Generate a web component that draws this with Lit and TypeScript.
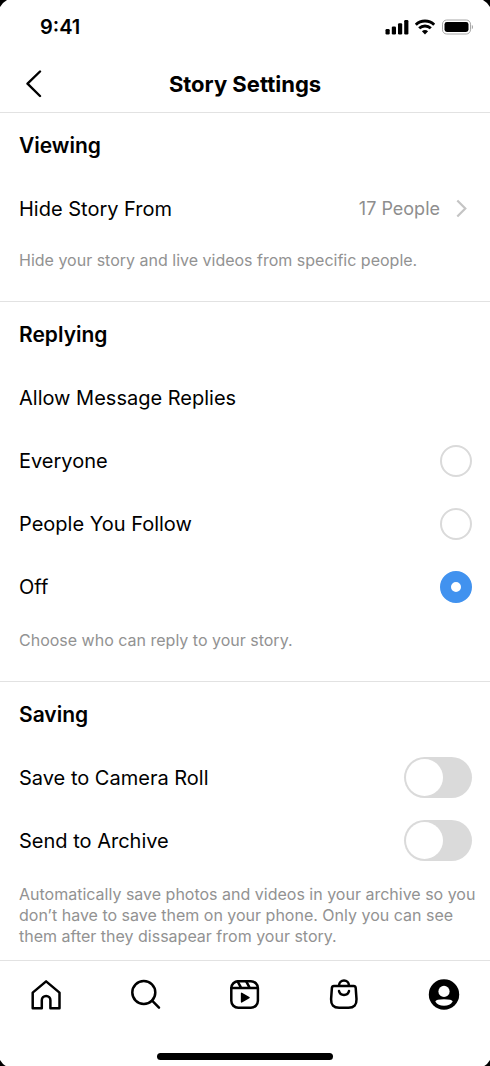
import { LitElement, html, css, svg } from "lit";
import { customElement, state } from "lit/decorators.js";

const home = svg`<path d="M2.7 29.2V13.6L16.1 2.4L29.5 13.6V29.2H20.4V21.2a4.3 4.3 0 0 0-8.6 0V29.2Z"/>`;
const search = svg`<circle cx="13.8" cy="13.4" r="11.5"/><path d="M22.1 21.7L29 28.6"/>`;
const reels = svg`<rect x="2.3" y="2.2" width="26.6" height="26.6" rx="7"/><path d="M2.3 8.9H28.9M8.6 2.4L12 8.7M17.2 2.4L20.6 8.7"/><path d="M12.6 14.3V22.9L20 18.6Z" fill="currentColor" stroke-width="1.5"/>`;
const shop = svg`<path d="M4.9 7H24.7Q26.5 7 26.7 8.8L27.5 20.2Q27.8 28.8 19.5 28.8H10.1Q1.8 28.8 2.1 20.2L2.9 8.8Q3.1 7 4.9 7Z"/><path d="M10.1 6.7V6.3a4.9 4.9 0 0 1 9.8 0V6.7M10 12a5.1 4.9 0 0 0 10 0"/>`;
const profile = svg`<circle cx="16" cy="15.5" r="15.2" fill="currentColor" stroke="none"/><circle cx="16" cy="12.4" r="5.6" fill="#fff" stroke="none"/><path d="M7.3 22.4Q8 20.3 16 20.3T24.7 22.4Q22 26.8 16 26.8T7.3 22.4Z" fill="#fff" stroke="none"/>`;

const tabs = [
  { label: "Home", icon: home },
  { label: "Search", icon: search },
  { label: "Reels", icon: reels },
  { label: "Shop", icon: shop },
  { label: "Profile", icon: profile },
];

const audiences = ["Everyone", "People You Follow", "Off"];
const savingOptions = ["Save to Camera Roll", "Send to Archive"];

@customElement("app-root")
export class AppRoot extends LitElement {
  @state() private replies = "Off";

  static styles = css`
    :host {
      display: block;
      background: #000;
      color: #000;
      font-family: Inter, "Liberation Sans", sans-serif;
      font-size: 20px;
      line-height: 24px;
    }
    * {
      box-sizing: border-box;
    }
    h1, h2, p, fieldset {
      margin: 0;
      padding: 0;
      border: 0;
    }
    a {
      color: inherit;
      text-decoration: none;
    }
    .screen {
      display: flex;
      flex-direction: column;
      min-height: 100vh;
      background: #fff;
      clip-path: polygon(
        0 7px, 3px 3px, 7px 0,
        calc(100% - 7px) 0, calc(100% - 3px) 3px, 100% 7px,
        100% calc(100% - 7px), calc(100% - 3px) calc(100% - 3px), calc(100% - 7px) 100%,
        7px 100%, 3px calc(100% - 3px), 0 calc(100% - 7px)
      );
    }
    .status {
      display: flex;
      align-items: center;
      justify-content: space-between;
      height: 54px;
      padding: 0 16px 0 40px;
      font-weight: 600;
    }
    .header {
      display: grid;
      grid-template-columns: 32px 1fr 32px;
      align-items: center;
      height: 59px;
      padding: 2px 18px 0;
      border-bottom: 1px solid #e2e2e2;
    }
    .back {
      display: flex;
      justify-content: center;
      padding: 0;
      border: 0;
      background: none;
      color: inherit;
    }
    .title {
      font-size: 22px;
      font-weight: 700;
      text-align: center;
    }
    .section {
      padding: 0 18px 30px 19px;
      border-bottom: 1px solid #e2e2e2;
    }
    .section:last-child {
      padding-bottom: 13px;
      border-bottom: 0;
    }
    .heading {
      padding-top: 2px;
      font-size: 21px;
      font-weight: 600;
      line-height: 62px;
    }
    .rows {
      padding-bottom: 2px;
    }
    .row {
      display: flex;
      align-items: center;
      justify-content: space-between;
      height: 63px;
    }
    .value {
      display: flex;
      align-items: center;
      gap: 16px;
      padding-right: 4px;
      color: #8e8e8e;
      font-size: 18px;
    }
    .hint {
      margin-right: -12px;
      padding-top: 10px;
      color: #929292;
      font-size: 16px;
      line-height: 21px;
    }
    .radio, .switch {
      appearance: none;
      flex: none;
      margin: 0;
    }
    .radio {
      width: 32px;
      height: 32px;
      border: 2px solid #dadada;
      border-radius: 50%;
    }
    .radio:checked {
      border: 11px solid #4192ef;
    }
    .switch {
      display: flex;
      width: 68px;
      height: 41px;
      padding: 2px;
      border-radius: 21px;
      background: #dadada;
    }
    .switch::before {
      content: "";
      width: 37px;
      height: 37px;
      border-radius: 50%;
      background: #fff;
    }
    .switch:checked {
      justify-content: flex-end;
      background: #4192ef;
    }
    .tabs {
      display: flex;
      justify-content: space-between;
      margin-top: auto;
      padding: 18px 30px 42px;
      border-top: 1px solid #e2e2e2;
    }
    .tab {
      display: flex;
    }
    .indicator {
      align-self: center;
      width: 36%;
      height: 7px;
      margin-bottom: 7px;
      border-radius: 4px;
      background: #000;
    }
  `;

  render() {
    return html`
      <div class="screen">
        <div class="status">
          <span>9:41</span>
          <svg width="90" height="18" viewBox="0 0 90 18" aria-hidden="true">
            <rect x="1.5" y="11" width="4.2" height="5.5" rx="1.2" />
            <rect x="7.8" y="8.5" width="4.2" height="8" rx="1.2" />
            <rect x="14" y="5.3" width="4.2" height="11.2" rx="1.2" />
            <rect x="20.2" y="2" width="4.2" height="14.5" rx="1.2" />
            <g fill="none" stroke="#000" stroke-width="2.9">
              <path d="M31.8 6.7a13.3 13.3 0 0 1 18.4 0" />
              <path d="M35.2 10.3a8.3 8.3 0 0 1 11.6 0" />
            </g>
            <path d="M37.9 13.3a4.6 4.6 0 0 1 6.2 0L41 16.5Z" />
            <rect x="58.5" y="2" width="28" height="14" rx="4.2" fill="none" stroke="#a6a6a6" />
            <rect x="60.5" y="4" width="24" height="10" rx="2.4" />
            <path d="M87.8 6.8a2.7 2.7 0 0 1 0 4.6Z" fill="#a6a6a6" />
          </svg>
        </div>
        <header class="header">
          <button class="back" aria-label="Back">
            <svg width="32" height="28" viewBox="0 0 32 28" fill="none" stroke="currentColor" stroke-width="2.4" stroke-linecap="round" stroke-linejoin="round">
              <path d="M22 1.5L9.5 13.7L22 26" />
            </svg>
          </button>
          <h1 class="title">Story Settings</h1>
        </header>
        <main>
          <section class="section">
            <h2 class="heading">Viewing</h2>
            <a class="row" href="#hide-story">
              <span>Hide Story From</span>
              <span class="value">
                17 People
                <svg width="12" height="20" viewBox="0 0 12 20" fill="none" stroke="#c4c4c4" stroke-width="2.2">
                  <path d="M1.3 1.5L9.3 9.5L1.3 17.5" />
                </svg>
              </span>
            </a>
            <p class="hint">Hide your story and live videos from specific people.</p>
          </section>
          <section class="section">
            <h2 class="heading">Replying</h2>
            <div class="row" id="replies">Allow Message Replies</div>
            <fieldset class="rows" aria-labelledby="replies">
              ${audiences.map(
                (name) => html`
                  <label class="row">
                    <span>${name}</span>
                    <input
                      class="radio"
                      type="radio"
                      name="replies"
                      .checked=${this.replies === name}
                      @change=${() => (this.replies = name)}
                    />
                  </label>
                `
              )}
            </fieldset>
            <p class="hint">Choose who can reply to your story.</p>
          </section>
          <section class="section">
            <h2 class="heading">Saving</h2>
            <div class="rows">
              ${savingOptions.map(
                (name) => html`
                  <label class="row">
                    <span>${name}</span>
                    <input class="switch" type="checkbox" role="switch" />
                  </label>
                `
              )}
            </div>
            <p class="hint">
              Automatically save photos and videos in your archive so you don’t have to save them on your phone. Only you can see them after they dissapear from your story.
            </p>
          </section>
        </main>
        <nav class="tabs">
          ${tabs.map(
            (tab) => html`
              <a class="tab" href="#${tab.label.toLowerCase()}" aria-label=${tab.label}>
                <svg width="32" height="32" viewBox="0 0 32 32" fill="none" stroke="currentColor" stroke-width="2.5" stroke-linejoin="round" stroke-linecap="round">
                  ${tab.icon}
                </svg>
              </a>
            `
          )}
        </nav>
        <div class="indicator"></div>
      </div>
    `;
  }
}
